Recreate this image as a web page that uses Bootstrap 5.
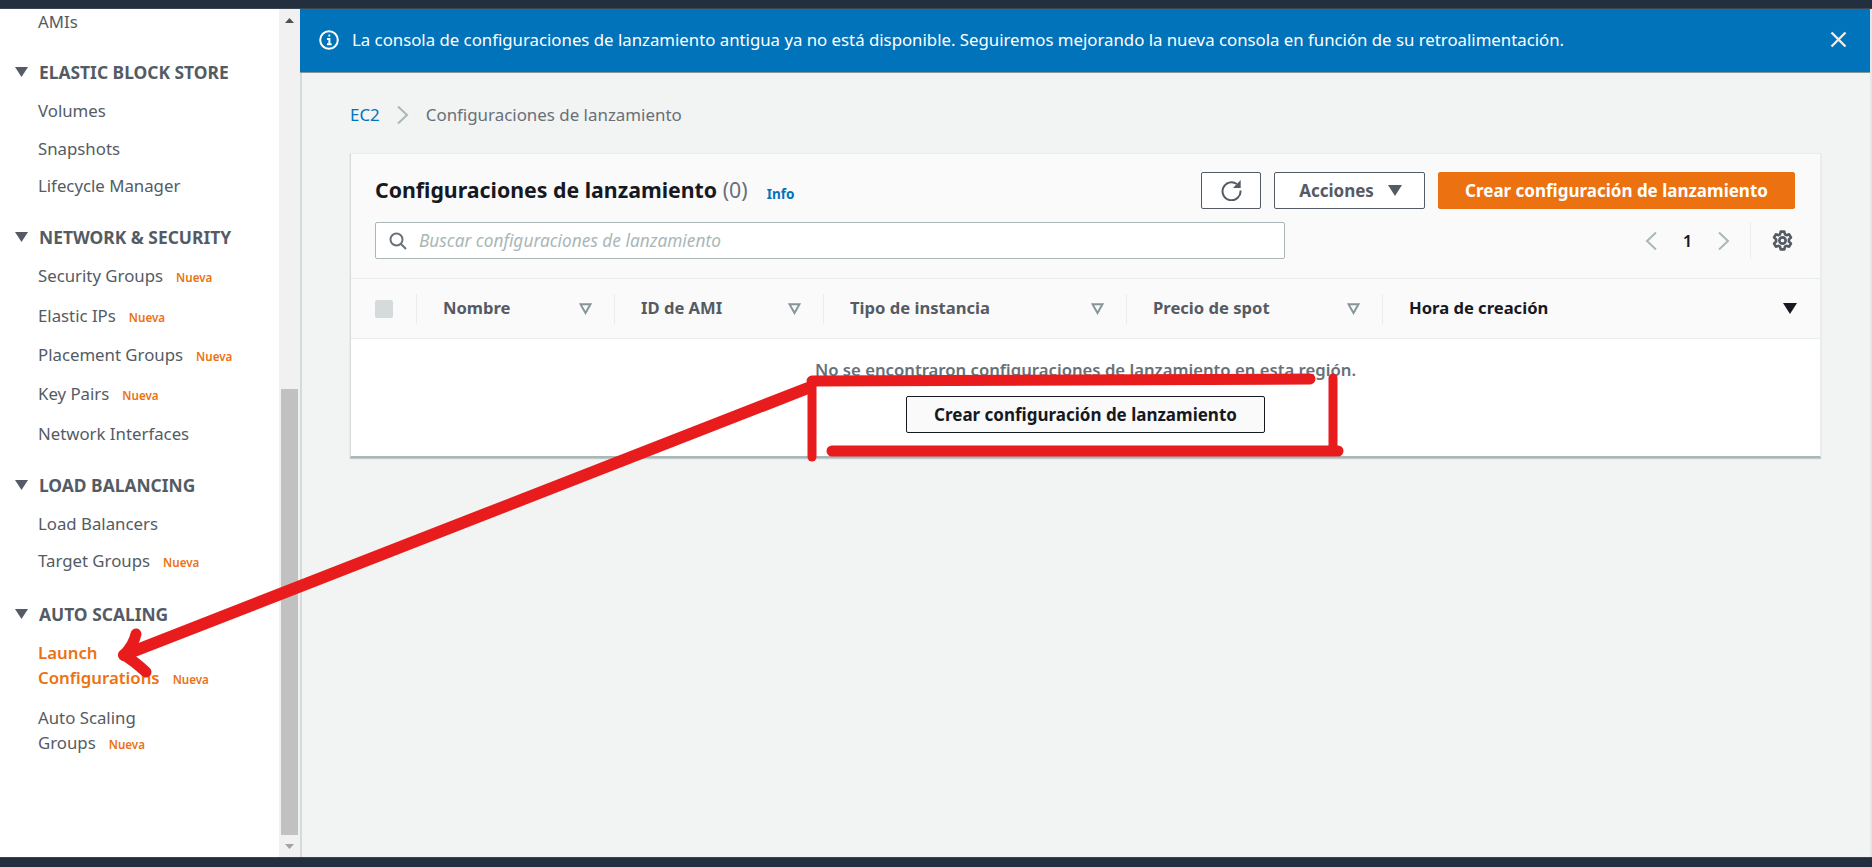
<!DOCTYPE html>
<html lang="es">
<head>
<meta charset="utf-8">
<title>Configuraciones de lanzamiento</title>
<link rel="stylesheet" href="https://cdn.jsdelivr.net/npm/bootstrap@5.3.0/dist/css/bootstrap.min.css">
<style>
html,body{height:867px;overflow:hidden}
body{font-family:"Noto Sans","Open Sans",sans-serif;font-size:16.8px;color:#545b64;background:#f2f3f3;position:relative}
.topstrip{height:8px;background:#232f3e;border-bottom:1px solid #3b4552;box-sizing:content-box}
.botstrip{height:10px;background:#232f3e;border-top:1px solid #3b4552}
.shell{height:848px;border-right:2px solid #e4e7e7}
.sidepane{width:279px;background:#fff;overflow:hidden;flex:none}
.scrolltrack{width:21px;background:#f1f1f1;flex:none;padding:0 2px}
.arrow-up,.arrow-down{width:17px;height:22px;display:flex;align-items:center;justify-content:center}
.thumb{height:446px;background:#c1c1c1}
.sect{font-weight:700;color:#545b64;font-size:17.400px;line-height:24px;display:flex;align-items:center;padding-left:15px}
.sect svg{margin-right:11px}
.navitem{display:block;padding:0 0 0 38px;font-size:16.800px;line-height:25px;color:#545b64;text-decoration:none}
.newtag{color:#ec7211;font-size:11.600px;font-weight:600;margin-left:13px}
.activeitem{color:#ec7211;font-weight:600}
.mainpane{min-width:0}
.infobar{background:#0073bb;color:#fff;height:64px;border:0;border-bottom:1px solid #879596;border-radius:0;margin:0;padding:0 23px 2px 19px;font-size:16.800px}
.bannertext{margin-left:13px}
.belowbar{border-left:2px solid #d5dbdb;height:784px}
.crumbs{margin:0;padding:31px 0 0 48px;height:80px;font-size:16.900px;line-height:22px;align-items:flex-start;align-content:flex-start}
.crumbs a{color:#0073bb;text-decoration:none}
.crumbs .breadcrumb-item{color:#687078}
.crumbs .breadcrumb-item+.breadcrumb-item{padding-left:0}
.crumbs .breadcrumb-item+.breadcrumb-item::before{content:none}
.crumbsep{margin:0 17px;height:22px;display:flex;align-items:center;list-style:none}
.listcard{margin-left:48px;width:1471px;height:305px;border:0;border-radius:0;border-top:1px solid #eaeded;border-right:1px solid #eaeded;border-left:1px solid #d5dbdb;border-bottom:2px solid #aab7b8;box-shadow:0 1px 1px rgba(0,28,36,.2);background:#fff}
.cardhead{background:#fafafa;height:125px;padding:16px 25px 0 24px;border-bottom:1px solid #eaeded}
.titletext{font-size:21.300px;font-weight:700;color:#16191f;line-height:35px;padding-top:2px}
.titlecount{font-weight:400;color:#687078}
.infolink{font-size:13.500px;font-weight:700;color:#0073bb;text-decoration:none;margin-left:19px;position:relative;top:1px}
.awsbtn{height:37px;border-radius:2px;border:1px solid #545b64;background:#fff;color:#545b64;font-weight:700;font-size:17px;padding:0;display:inline-flex;align-items:center;justify-content:center}
.awsbtn:hover{background:#fff;color:#545b64;border-color:#545b64}
.refreshbtn{width:60px}
.actionsbtn{width:151px;gap:14px;margin-left:13px;padding-left:2px}
.orangebtn{width:357px;margin-left:13px;background:#ec7211;border-color:#ec7211;color:#fff}
.orangebtn:hover{background:#ec7211;border-color:#ec7211;color:#fff}
.searchbox{width:910px;height:37px;border:1px solid #aab7b8;border-radius:2px;background:#fff;padding:0 14px 0 13px;gap:12px}
.searchinput{border:0;outline:0;padding:0;flex:1;font-style:italic;font-size:17.300px;color:#545b64;background:transparent}
.searchinput::placeholder{color:#aab7b8;opacity:1}
.pager{margin-right:2px}
.pagenum{width:61px;text-align:center;color:#16191f;font-weight:600}
.pagediv{width:1px;height:37px;background:#eaeded;margin:0 21px 0 20px}
.headrow{height:60px;background:#fafafa;border-bottom:1px solid #eaeded}
.hcell{height:30px;display:flex;align-items:center;border-left:1px solid #eaeded;padding-left:26px;padding-right:22px;justify-content:space-between;font-weight:700;font-size:16.600px;flex:none}
.hcheck{width:65px;padding-left:24px;flex:none}
.hcheck span{display:block;width:18px;height:18px;background:#d5dbdb;border-radius:2px}
.cname{width:198px}
.cami{width:209px}
.ctype{width:303px}
.cspot{width:256px}
.ctime{flex:1;color:#16191f;padding-right:23px}
.emptyarea{text-align:center;padding-top:20px;font-weight:600;color:#687078;font-size:16.700px;line-height:22px}
.outlinebtn{width:359px;margin:15px auto 0;display:flex;border-color:#16191f;color:#16191f;background:#fafafa}
.outlinebtn:hover{border-color:#16191f;color:#16191f;background:#fafafa}
.inkoverlay{position:absolute;left:0;top:0;pointer-events:none}
.mt-item12{margin-top:12px}.mt-item13{margin-top:13px}.mt-item14{margin-top:14px}
.mt-sect26{margin-top:26px}.mt-sect27{margin-top:27px}.mt-sect28{margin-top:28px}
.rowgap{margin-top:11px}
</style>
</head>
<body>
<div class="topstrip"></div>
<div class="shell d-flex">
  <nav class="sidepane">
    <a class="navitem" href="#">AMIs</a>
    <div class="sect mt-sect26"><svg width="13" height="10" viewBox="0 0 13 10"><path d="M0 0h13L6.500 10z" fill="#545b64"/></svg>ELASTIC BLOCK STORE</div>
    <a class="navitem mt-item14" href="#">Volumes</a>
    <a class="navitem mt-item13" href="#">Snapshots</a>
    <a class="navitem mt-item12" href="#">Lifecycle Manager</a>
    <div class="sect mt-sect27"><svg width="13" height="10" viewBox="0 0 13 10"><path d="M0 0h13L6.500 10z" fill="#545b64"/></svg>NETWORK &amp; SECURITY</div>
    <a class="navitem mt-item14" href="#">Security Groups<span class="newtag">Nueva</span></a>
    <a class="navitem mt-item13" href="#">Elastic IPs<span class="newtag">Nueva</span></a>
    <a class="navitem mt-item12" href="#">Placement Groups<span class="newtag">Nueva</span></a>
    <a class="navitem mt-item12" href="#">Key Pairs<span class="newtag">Nueva</span></a>
    <a class="navitem mt-item13" href="#">Network Interfaces</a>
    <div class="sect mt-sect27"><svg width="13" height="10" viewBox="0 0 13 10"><path d="M0 0h13L6.500 10z" fill="#545b64"/></svg>LOAD BALANCING</div>
    <a class="navitem mt-item14" href="#">Load Balancers</a>
    <a class="navitem mt-item12" href="#">Target Groups<span class="newtag">Nueva</span></a>
    <div class="sect mt-sect27"><svg width="13" height="10" viewBox="0 0 13 10"><path d="M0 0h13L6.500 10z" fill="#545b64"/></svg>AUTO SCALING</div>
    <a class="navitem activeitem mt-item14" href="#">Launch<br>Configurations<span class="newtag">Nueva</span></a>
    <a class="navitem mt-item13" href="#">Auto Scaling<br>Groups<span class="newtag">Nueva</span></a>
  </nav>
  <div class="scrolltrack d-flex flex-column">
    <div class="arrow-up"><svg width="9" height="5" viewBox="0 0 9 5"><path d="M0 5h9L4.500 0z" fill="#505050"/></svg></div>
    <div class="flex-grow-1"></div>
    <div class="thumb"></div>
    <div class="arrow-down"><svg width="9" height="5" viewBox="0 0 9 5"><path d="M0 0h9L4.500 5z" fill="#a3a3a3"/></svg></div>
  </div>
  <main class="mainpane flex-grow-1">
    <div class="alert infobar d-flex align-items-center">
      <svg width="20" height="20" viewBox="0 0 20 20" fill="none" stroke="#fff" stroke-width="2"><circle cx="10" cy="10" r="8.800"/><path d="M8 9h2.400v5M8 14.300h4.600M9.400 5.400h1.800" stroke-width="2"/></svg>
      <span class="flex-grow-1 bannertext">La consola de configuraciones de lanzamiento antigua ya no está disponible. Seguiremos mejorando la nueva consola en función de su retroalimentación.</span>
      <svg width="17" height="17" viewBox="0 0 17 17" stroke="#eaeded" stroke-width="2.400" fill="none"><path d="M1.500 1.500l14 14M15.500 1.500l-14 14"/></svg>
    </div>
    <div class="belowbar">
    <ol class="breadcrumb crumbs">
      <li class="breadcrumb-item"><a href="#">EC2</a></li>
      <li class="crumbsep"><svg width="12" height="20" viewBox="0 0 12 20" fill="none" stroke="#aab7b8" stroke-width="2"><path d="M1 1.500l9 8.500-9 8.500"/></svg></li>
      <li class="breadcrumb-item active">Configuraciones de lanzamiento</li>
    </ol>
    <section class="card listcard">
      <div class="cardhead">
        <div class="d-flex align-items-center justify-content-between">
          <div class="titletext">Configuraciones de lanzamiento <span class="titlecount">(0)</span><a class="infolink" href="#">Info</a></div>
          <div class="d-flex">
            <button class="btn awsbtn refreshbtn" aria-label="Actualizar"><svg width="21" height="21" viewBox="0 0 21 21" fill="none" stroke="#545b64" stroke-width="2"><path d="M15.800 4A9 9 0 1 0 19.500 10.500"/><path d="M19.700 0v8H12z" fill="#545b64" stroke="none"/></svg></button>
            <button class="btn awsbtn actionsbtn">Acciones <svg width="14" height="11" viewBox="0 0 14 11"><path d="M0 0h14L7 11z" fill="#545b64"/></svg></button>
            <button class="btn awsbtn orangebtn">Crear configuración de lanzamiento</button>
          </div>
        </div>
        <div class="d-flex align-items-center justify-content-between rowgap">
          <div class="d-flex align-items-center searchbox">
            <svg width="18" height="18" viewBox="0 0 18 18" fill="none" stroke="#687078" stroke-width="2"><circle cx="7.500" cy="7.500" r="6"/><path d="M12 12l5 5"/></svg>
            <input class="searchinput" placeholder="Buscar configuraciones de lanzamiento" aria-label="Buscar">
          </div>
          <div class="d-flex align-items-center pager">
            <svg width="12" height="20" viewBox="0 0 12 20" fill="none" stroke="#aab7b8" stroke-width="2"><path d="M11 1.500L2 10l9 8.500"/></svg>
            <span class="pagenum">1</span>
            <svg width="12" height="20" viewBox="0 0 12 20" fill="none" stroke="#aab7b8" stroke-width="2"><path d="M1 1.500L10 10l-9 8.500"/></svg>
            <span class="pagediv"></span>
            <svg width="21" height="21" viewBox="0 0 20 20" fill="none" stroke="#545b64" stroke-width="2.500"><circle cx="10" cy="10" r="3"/><path d="M8.300 1.500h3.400l.6 2.600 1.500.8 2.500-.8 1.700 3-1.900 1.800v2.200l1.900 1.800-1.700 3-2.500-.8-1.500.8-.6 2.600H8.300l-.6-2.600-1.500-.8-2.500.8-1.700-3 1.900-1.800V8.900L2 7.100l1.700-3 2.500.8 1.500-.8z" stroke-linejoin="round"/></svg>
          </div>
        </div>
      </div>
      <div class="headrow d-flex align-items-center">
        <div class="hcheck"><span></span></div>
        <div class="hcell cname">Nombre <svg width="13" height="12" viewBox="0 0 13 12" fill="none" stroke="#879596" stroke-width="2"><path d="M1.500 1.200h10L6.500 10z"/></svg></div>
        <div class="hcell cami">ID de AMI <svg width="13" height="12" viewBox="0 0 13 12" fill="none" stroke="#879596" stroke-width="2"><path d="M1.500 1.200h10L6.500 10z"/></svg></div>
        <div class="hcell ctype">Tipo de instancia <svg width="13" height="12" viewBox="0 0 13 12" fill="none" stroke="#879596" stroke-width="2"><path d="M1.500 1.200h10L6.500 10z"/></svg></div>
        <div class="hcell cspot">Precio de spot <svg width="13" height="12" viewBox="0 0 13 12" fill="none" stroke="#879596" stroke-width="2"><path d="M1.500 1.200h10L6.500 10z"/></svg></div>
        <div class="hcell ctime">Hora de creación <svg width="14" height="11" viewBox="0 0 14 11"><path d="M0 0h14L7 11z" fill="#16191f"/></svg></div>
      </div>
      <div class="emptyarea">
        <div>No se encontraron configuraciones de lanzamiento en esta región.</div>
        <button class="btn awsbtn outlinebtn">Crear configuración de lanzamiento</button>
      </div>
    </section>
    </div>
  </main>
</div>
<div class="botstrip"></div>
<svg class="inkoverlay" width="1872" height="867" viewBox="0 0 1872 867" fill="none" stroke="#e81c1c" stroke-linecap="round" stroke-linejoin="round">
  <path d="M812 381L1310 379" stroke-width="11"/>
  <path d="M812 381L812 457" stroke-width="9"/>
  <path d="M832 451L1338 451" stroke-width="11"/>
  <path d="M1333 378L1333 451" stroke-width="9"/>
  <path d="M808 388L124 655" stroke-width="12"/>
  <path d="M136 634Q134 644 124 655Q134 661 146 672" stroke-width="11"/>
</svg>
</body>
</html>
